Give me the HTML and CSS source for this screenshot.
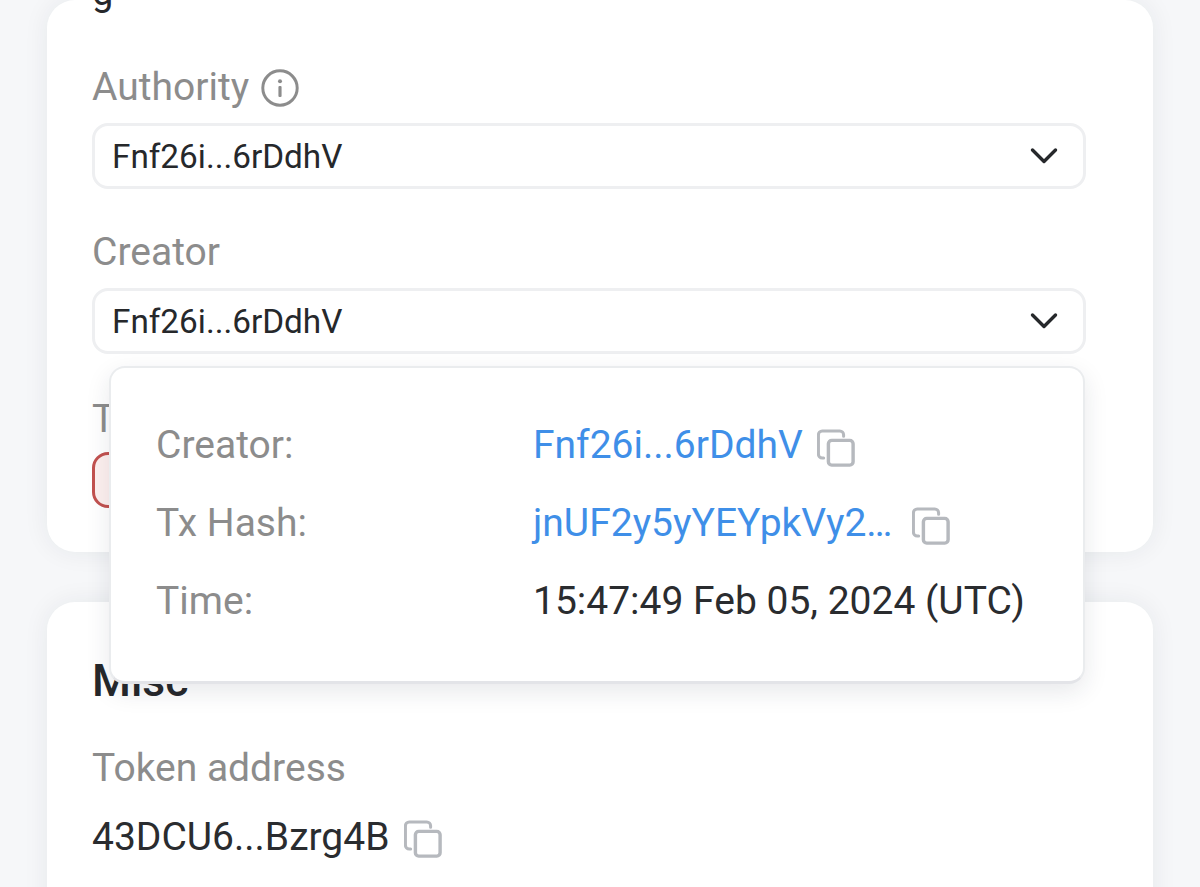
FILE: index.html
```html
<!DOCTYPE html>
<html lang="en">
<head>
  <meta charset="UTF-8">
  <meta name="viewport" content="width=device-width, initial-scale=1.0">
  <title>Token details</title>
  <link rel="stylesheet" href="styles.css">
</head>
<body>

  <svg class="icon-defs" width="0" height="0">
    <symbol id="copy" viewBox="0 0 40 40">
      <path d="M7 30.5h-1.5a4 4 0 0 1-4-4V6a4 4 0 0 1 4-4H24a4 4 0 0 1 4 4v1.5" fill="none" stroke="currentColor" stroke-width="3.2" stroke-linecap="round"/>
      <rect x="12" y="12" width="26" height="26" rx="3.5" fill="none" stroke="currentColor" stroke-width="3.6"/>
    </symbol>
    <symbol id="chevron" viewBox="0 0 28 18">
      <path d="M2.5 3l11.5 11.5L25.500 3" fill="none" stroke="currentColor" stroke-width="3.400" stroke-linecap="round" stroke-linejoin="round"/>
    </symbol>
  </svg>

  <div class="page">
    <section class="card card-main">
      <p class="value first-value">g</p>

      <div class="label label-authority">
        Authority
        <svg class="info-icon" viewBox="0 0 36 36">
          <circle cx="18" cy="18" r="16.300" fill="none" stroke="currentColor" stroke-width="2.800"/>
          <circle cx="18" cy="11.500" r="1.900" fill="currentColor"/>
          <rect x="16.500" y="16" width="3" height="10.500" rx="1" fill="currentColor"/>
        </svg>
      </div>
      <div class="select">
        <span>Fnf26i...6rDdhV</span>
        <svg class="chevron"><use href="#chevron"/></svg>
      </div>

      <div class="label label-creator">Creator</div>
      <div class="select">
        <span>Fnf26i...6rDdhV</span>
        <svg class="chevron"><use href="#chevron"/></svg>
      </div>

      <div class="label label-tag">Tag</div>
      <div class="tag-box"></div>
    </section>

    <section class="card card-misc">
      <h2>Misc</h2>
      <div class="label label-token">Token address</div>
      <div class="address">
        <span>43DCU6...Bzrg4B</span>
        <svg class="copy-icon"><use href="#copy"/></svg>
      </div>
    </section>

    <div class="popover">
      <div class="pop-row">
        <span class="pop-label">Creator:</span>
        <span class="pop-value link">Fnf26i...6rDdhV <svg class="copy-icon"><use href="#copy"/></svg></span>
      </div>
      <div class="pop-row">
        <span class="pop-label">Tx Hash:</span>
        <span class="pop-value link">jnUF2y5yYEYpkVy2… <svg class="copy-icon copy-hash"><use href="#copy"/></svg></span>
      </div>
      <div class="pop-row">
        <span class="pop-label">Time:</span>
        <span class="pop-value">15:47:49 Feb 05, 2024 (UTC)</span>
      </div>
    </div>
  </div>

</body>
</html>
```

FILE: styles.css
```css
* {
  box-sizing: border-box;
  margin: 0;
  padding: 0;
}

html, body {
  height: 100%;
  overflow: hidden;
}

body {
  background: #f6f7f9;
  font-family: Roboto, "Liberation Sans", sans-serif;
  color: #26282b;
}

.icon-defs {
  display: block;
}

.page {
  position: relative;
  height: 887px;
  overflow: hidden;
  padding: 0 47px;
}

.card {
  background: #fff;
  border-radius: 28px;
  padding: 0 67px 0 45px;
  box-shadow: 0 0 26px rgba(30, 40, 60, 0.07);
}

.card-main {
  height: 552px;
  overflow: hidden;
}

.card-misc {
  height: 400px;
  margin-top: 50px;
  padding-top: 55px;
}

.value {
  font-size: 38px;
  line-height: 40px;
  margin-top: -28px;
}

.first-value {
  height: 40px;
}

.label {
  font-size: 39px;
  line-height: 44px;
  color: #8c8c8c;
  display: flex;
  align-items: center;
}

.label-authority {
  margin-top: 53px;
}

.label-creator {
  margin-top: 41px;
}

.label-tag {
  margin-top: 43px;
}

.label-token {
  margin-top: 41px;
}

.info-icon {
  width: 38px;
  height: 38px;
  margin-left: 12px;
  margin-top: 2px;
  color: #8c8c8c;
}

.select {
  height: 66px;
  margin-top: 14px;
  border: 3px solid #eeeff1;
  border-radius: 16px;
  padding: 0 25px 0 17px;
  display: flex;
  align-items: center;
  justify-content: space-between;
  font-size: 33.300px;
}

.chevron {
  width: 28px;
  height: 18px;
  color: #26282b;
}

.tag-box {
  width: 200px;
  height: 56px;
  margin-top: 11px;
  border: 3px solid #c2514f;
  border-radius: 16px;
  background: #fdf0ef;
}

h2 {
  font-size: 44.500px;
  line-height: 48px;
  font-weight: 500;
}

.address {
  display: flex;
  align-items: center;
  margin-top: 25px;
  font-size: 39px;
  line-height: 44px;
  color: #2a2c2f;
}

.copy-icon {
  width: 38px;
  height: 38px;
  color: #b6b9be;
  flex-shrink: 0;
}

.address .copy-icon {
  margin-left: 14px;
  margin-top: 4px;
}

.popover {
  position: absolute;
  left: 109px;
  top: 366px;
  width: 976px;
  height: 318px;
  padding: 38px 45px;
  background: #fff;
  border: 2px solid #eaecee;
  border-bottom: 3px solid #e3e4e8;
  border-radius: 16px;
  box-shadow: 0 8px 24px rgba(30, 40, 60, 0.1);
}

.pop-row {
  display: flex;
  align-items: center;
  height: 78px;
  font-size: 39px;
}

.pop-label {
  width: 377px;
  color: #8c8c8c;
}

.pop-value {
  display: flex;
  align-items: center;
  white-space: pre;
  color: #2a2c2f;
}

.link {
  color: #3f8fe8;
}

.link .copy-icon {
  margin-top: 5px;
  margin-left: 4px;
}

.link .copy-hash {
  margin-left: 10px;
}
```
